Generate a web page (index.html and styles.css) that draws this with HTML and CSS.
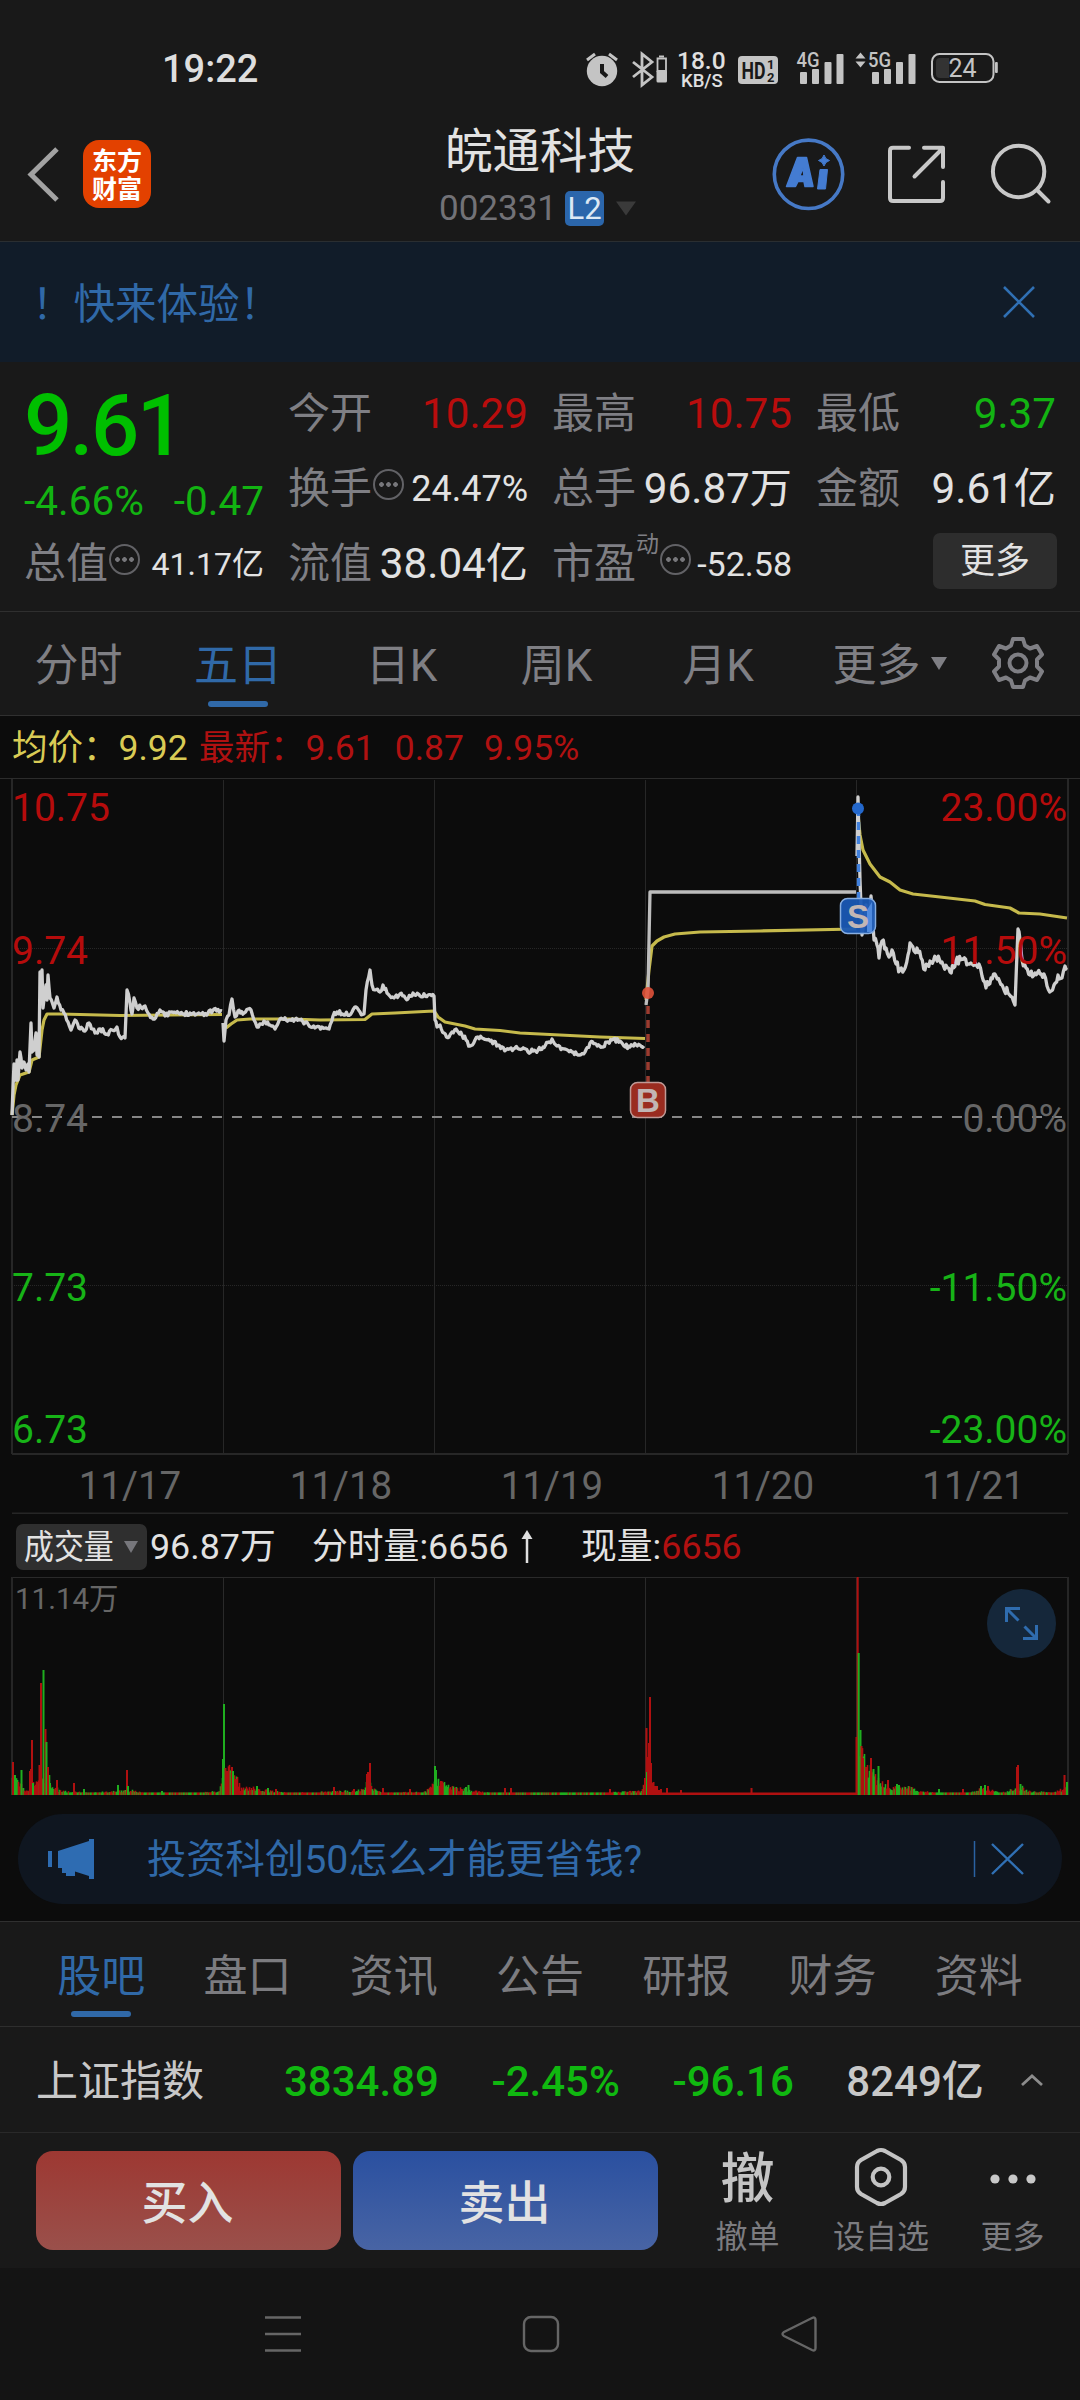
FILE: index.html
```html
<!DOCTYPE html>
<html lang="zh-CN">
<head>
<meta charset="utf-8">
<title>皖通科技 002331</title>
<link rel="stylesheet" href="styles.css">
</head>
<body>
<div class="screen">
  <div class="status">
    <span class="clock">19:22</span>
    <svg class="status-icons" width="424" height="44" viewBox="580 46 424 44">
      <g fill="#c4c4c4">
        <circle cx="602" cy="71" r="15.2"/>
        <path d="M587 60l8-6M609 54l8 6" stroke="#c4c4c4" stroke-width="3"/>
        <path d="M602 64v8l5 4.500" fill="none" stroke="#191919" stroke-width="4"/>
        <path d="M633 62l19 15-10 8V54l10 8-19 15" fill="none" stroke="#c4c4c4" stroke-width="2.800"/>
        <path d="M657.500 58.500h8.500V71h-8.500z" fill="none" stroke="#c4c4c4" stroke-width="1.800"/>
        <rect x="656.500" y="70" width="10.500" height="12.500" rx="1.500"/><rect x="659" y="55.500" width="5" height="2"/>
        <text x="677" y="69" class="s-speed">18.0</text>
        <text x="681" y="87" class="s-unit">KB/S</text>
        <rect x="738" y="56" width="40" height="28" rx="4"/>
        <text x="741.500" y="79" class="s-hd" textLength="24" lengthAdjust="spacingAndGlyphs">HD</text>
        <text x="767" y="69" class="s-num">1</text><text x="767" y="82" class="s-num">2</text>
        <text x="796.500" y="67" class="s-net" textLength="23" lengthAdjust="spacingAndGlyphs">4G</text>
        <rect x="800" y="72" width="7" height="12" rx="1"/><rect x="812" y="69" width="7" height="15" rx="1"/><rect x="824.500" y="62" width="7" height="22" rx="1"/><rect x="836.500" y="54" width="7" height="30" rx="1"/>
        <path d="M855.500 58.500l5-6 5 6zM855.500 61.500l5 6 5-6z"/>
        <text x="868" y="67" class="s-net" textLength="23" lengthAdjust="spacingAndGlyphs">5G</text>
        <rect x="872" y="72" width="7" height="12" rx="1"/><rect x="884" y="69" width="7" height="15" rx="1"/><rect x="896" y="62" width="7" height="22" rx="1"/><rect x="908.500" y="54" width="7" height="30" rx="1"/>
        <rect x="932" y="54" width="61.500" height="28" rx="7.500" fill="none" stroke="#c4c4c4" stroke-width="2"/>
        <path d="M940 58h9v20h-9a4 4 0 0 1-4-4V62a4 4 0 0 1 4-4z" fill="#333"/>
        <rect x="995" y="62" width="2.800" height="11" rx="1"/>
        <text x="948.500" y="77" class="s-bat">24</text>
      </g>
    </svg>
  </div>

  <header class="header">
    <div class="head-left">
      <svg width="34" height="56" viewBox="0 0 34 56"><path d="M31 3L5 28.500 31 54" fill="none" stroke="#a2a2a2" stroke-width="5"/></svg>
      <div class="logo">东方<br>财富</div>
    </div>
    <div class="head-mid">
      <div class="title">皖通科技</div>
      <div class="code"><span>002331</span><b>L2</b><svg width="22" height="15" viewBox="0 0 22 15"><path d="M1 .5h20L11 14.500z" fill="#3a3a3a"/></svg></div>
    </div>
    <svg class="head-tools" width="284" height="76" viewBox="770 136 284 76">
      <circle cx="808.500" cy="174.300" r="34.200" fill="none" stroke="#4679c6" stroke-width="3.600"/>
      <path d="M797.500 157.500h9l6.500 29h-8l-1-5h-6l-2.500 5h-9zM803 168l-3.200 8h4.200z" fill="#447cd2" fill-rule="evenodd" stroke="#447cd2" stroke-width="1.500" stroke-linejoin="round"/>
      <path d="M820 169.500h7.500l-2 19.500h-8zM824 155q1.200 4.500 5.500 5.500-4.300 1.200-5.500 5.500-1.200-4.300-5.500-5.500 4.300-1 5.500-5.500z" fill="#447cd2" stroke="#447cd2" stroke-width="1" stroke-linejoin="round"/>
      <g fill="none" stroke="#c8c8c8" stroke-width="4" stroke-linecap="round" stroke-linejoin="round">
        <path d="M909 147.800h-16q-3 0-3 3V198q0 3 3 3h47q3 0 3-3v-16M924 147.800h19V167M942 149l-27.500 27.500"/>
        <circle cx="1018.600" cy="171.500" r="25.700"/><path d="M1037.500 190.500l11 11"/>
      </g>
    </svg>
  </header>

  <div class="banner"><span>！快来体验！</span>
    <svg width="32" height="32" viewBox="0 0 32 32"><path d="M1 1l30 30M31 1L1 31" stroke="#3070b4" stroke-width="2.600"/></svg>
  </div>

  <section class="quote">
    <div class="col">
      <div class="price">9.61</div>
      <div class="change"><span>-4.66%</span><span>-0.47</span></div>
      <div class="cell"><span class="lb">总值<i class="dots"></i></span><span class="v v32">41.17亿</span></div>
    </div>
    <div class="col">
      <div class="cell"><span class="lb">今开</span><span class="v up">10.29</span></div>
      <div class="cell"><span class="lb">换手<i class="dots"></i></span><span class="v v36">24.47%</span></div>
      <div class="cell"><span class="lb">流值</span><span class="v">38.04亿</span></div>
    </div>
    <div class="col">
      <div class="cell"><span class="lb">最高</span><span class="v up">10.75</span></div>
      <div class="cell"><span class="lb">总手</span><span class="v">96.87万</span></div>
      <div class="cell"><span class="lb">市盈<em>动</em><i class="dots"></i></span><span class="v v34">-52.58</span></div>
    </div>
    <div class="col">
      <div class="cell"><span class="lb">最低</span><span class="v down">9.37</span></div>
      <div class="cell"><span class="lb">金额</span><span class="v">9.61亿</span></div>
      <div class="cell end"><span class="more">更多</span></div>
    </div>
  </section>

  <nav class="periods">
    <span>分时</span><span class="on">五日</span><span>日K</span><span>周K</span><span>月K</span>
    <span class="pm">更多<svg width="16" height="13" viewBox="0 0 16 13"><path d="M0 0h16L8 13z" fill="#7f7f84"/></svg></span>
    <svg class="gear" width="54" height="54" viewBox="-27 -27 54 54" fill="none" stroke="#7f7f84" stroke-width="4" stroke-linejoin="round"><path d="M-5-24H5L7-17.500 12-14.500 19-17 24-8.500 19-3.500V3.500L24 8.500 19 17 12 14.500 7 17.500 5 24H-5L-7 17.500-12 14.500-19 17-24 8.500-19 3.500V-3.500L-24-8.500-19-17-12-14.500-7-17.500Z"/><circle r="8.500"/></svg>
  </nav>

  <div class="legend"><span class="avg">均价：9.92</span><span class="last">最新：9.61</span><span class="last">0.87</span><span class="last">9.95%</span></div>

  <svg class="chart" id="price" width="1080" height="736" viewBox="0 778 1080 736">
    <g stroke="#272727" fill="none">
      <path d="M0 778.500H1080" stroke="#2c2c2c"/>
      <path d="M12 779V1454M1068 779V1454M12 1454H1068" stroke-width="2"/>
      <path d="M223.500 780V1453M434.500 780V1453M645.500 780V1453M856.500 780V1453"/>
      <path d="M12 948.500H1068M12 1285.500H1068" stroke-dasharray="1 1"/>
    </g>
    <path d="M12 1117H1064" stroke="#868686" stroke-width="2" stroke-dasharray="10 10"/>
    <g id="lines" fill="none" stroke-linejoin="round"></g>
    <g class="axis">
      <text x="12" y="821" class="r">10.75</text><text x="12" y="964" class="r">9.74</text><text x="12" y="1132">8.74</text><text x="12" y="1301" class="g">7.73</text><text x="12" y="1443" class="g">6.73</text>
      <g text-anchor="end"><text x="1067" y="821" class="r">23.00%</text><text x="1067" y="964" class="r">11.50%</text><text x="1067" y="1132">0.00%</text><text x="1067" y="1301" class="g">-11.50%</text><text x="1067" y="1443" class="g">-23.00%</text></g>
    </g>
    <g class="dates" text-anchor="middle"><text x="130" y="1499">11/17</text><text x="341" y="1499">11/18</text><text x="552" y="1499">11/19</text><text x="763" y="1499">11/20</text><text x="973.500" y="1499">11/21</text></g>
    <path d="M648 1006V1082" stroke="#9c3c30" stroke-width="3.500" stroke-dasharray="8 6"/>
    <circle cx="648" cy="993" r="6" fill="#e0523a" fill-opacity=".9"/>
    <rect x="630.500" y="1082.500" width="35" height="35" rx="7" fill="#9a2c20" stroke="#c09a96" stroke-width="1.500"/>
    <text x="648" y="1112" text-anchor="middle" class="mark">B</text>
    <path d="M858.500 808V898" stroke="#4080dc" stroke-width="3.500" stroke-dasharray="8 6"/>
    <circle cx="858" cy="808.500" r="6" fill="#2468cc"/>
    <rect x="840.500" y="898.500" width="35" height="35" rx="7" fill="#1a58b4" fill-opacity=".95" stroke="#88aee0" stroke-width="1.500"/>
    <path d="M867 932V910l5-8v30z" fill="#4f8ade"/>
    <text x="858" y="928" text-anchor="middle" class="mark">S</text>
    <path d="M12 1513.500H1068" stroke="#262626" stroke-width="2"/>
  </svg>

  <div class="vol-head">
    <span class="pick"><span>成交量</span><svg width="14" height="12" viewBox="0 0 14 12"><path d="M0 0h14L7 12z" fill="#77777c"/></svg></span>
    <span class="total">96.87万</span>
    <span class="minute">分时量:6656</span>
    <svg class="arrow" width="12" height="34" viewBox="0 0 12 34"><path d="M6 5V33" stroke="#e0e0e0" stroke-width="2.500"/><path d="M6 0l5.500 9H.5z" fill="#e0e0e0"/></svg>
    <span class="now">现量:<b>6656</b></span>
  </div>

  <svg class="chart" width="1080" height="225" viewBox="0 1577 1080 225">
    <path d="M12 1577.500H1068M223.500 1577V1795M434.500 1577V1795M645.500 1577V1795M856.500 1577V1795" stroke="#2a2a2a"/>
    <path d="M12 1577V1795M1068 1577V1795" stroke="#262626" stroke-width="2"/>
    <text x="15" y="1609" class="vmax">11.14万</text>
    <g id="volume"></g>
    <circle cx="1021.500" cy="1623.500" r="34.500" fill="#15273a"/>
    <path d="M1018.500 1620.500l-11-11M1020 1608.500h-13.500v13.500M1024.500 1626.500l11.500 11.500M1023 1638.500h13.500v-13.500" fill="none" stroke="#2f6cae" stroke-width="3"/>
  </svg>

  <div class="promo">
    <svg width="46" height="40" viewBox="0 0 46 40"><path d="M10 12L41 2V0h5v40h-5v-3L27 32.500V37H18V34H14V29H10zM0 12h4v16H0z" fill="#2e6cb2"/></svg>
    <span>投资科创50怎么才能更省钱?</span>
    <svg class="close" width="52" height="38" viewBox="0 0 52 38"><path d="M1.500 1V37" stroke="#2a62a2" stroke-width="1.500"/><path d="M19 4l31 30M50 4L19 34" stroke="#3070b4" stroke-width="2.400"/></svg>
  </div>

  <nav class="tabs"><span class="on">股吧</span><span>盘口</span><span>资讯</span><span>公告</span><span>研报</span><span>财务</span><span>资料</span></nav>

  <div class="index">
    <span class="name">上证指数</span><b>3834.89</b><b>-2.45%</b><b>-96.16</b><b class="amt">8249亿</b>
    <svg width="24" height="14" viewBox="0 0 24 14"><path d="M2 12L12 3l10 9" fill="none" stroke="#8c8c8c" stroke-width="2.800"/></svg>
  </div>

  <div class="actions">
    <div class="btn buy">买入</div><div class="btn sell">卖出</div>
    <div class="act a1"><strong>撤</strong><span>撤单</span></div>
    <div class="act a2"><svg width="60" height="62" viewBox="-30 -30 60 62" fill="none" stroke="#c4c4c4" stroke-width="4.200"><path d="M-4-26Q0-28 4-26L20-17Q24-14.500 24-10V10Q24 14.500 20 17L4 26Q0 28-4 26L-20 17Q-24 14.500-24 10V-10Q-24-14.500-20-17Z"/><circle r="8.300"/></svg><span>设自选</span></div>
    <div class="act a3"><svg width="60" height="62" viewBox="-30 -32 60 62" fill="#c8c8c8"><circle cx="-18" r="4.600"/><circle r="4.600"/><circle cx="18" r="4.600"/></svg><span>更多</span></div>
  </div>

  <div class="sysnav">
    <svg width="36" height="38" viewBox="0 0 36 38"><path d="M0 2.500h36M0 19h36M0 35.500h36" stroke="#666" stroke-width="2.500"/></svg>
    <svg width="38" height="38" viewBox="0 0 38 38"><rect x="2" y="2" width="34" height="34" rx="7" fill="none" stroke="#666" stroke-width="2.400"/></svg>
    <svg width="38" height="38" viewBox="0 0 38 38"><path d="M32 3q3.500-1.500 3.500 2V33q0 3.500-3.500 2L4 21q-3-2 0-4z" fill="none" stroke="#666" stroke-width="2.400"/></svg>
  </div>
</div>
<script src="chart.js"></script>
</body>
</html>
```
FILE: styles.css
```css
* { box-sizing: border-box; }
body { margin: 0; background: #191919; font-family: Roboto, "Noto Sans CJK SC", sans-serif; }
svg { display: block; flex: none; }
b, i, em { font-weight: inherit; font-style: normal; }
.screen { width: 1080px; height: 2400px; overflow: hidden; color: #e2e2e2; background: #191919; display: flex; flex-direction: column; }
.screen > * { flex: none; }

.status { height: 112px; padding: 46px 76px 22px 162px; display: flex; justify-content: space-between; }
.clock { font-size: 38px; line-height: 46px; font-weight: 500; color: #dedede; }
.s-speed { font-size: 24.500px; font-weight: 500; fill: #e0e0e0; }
.s-unit { font-size: 18.500px; font-weight: 500; fill: #e0e0e0; }
.s-hd { font-size: 24px; font-weight: 700; fill: #191919; }
.s-num { font-size: 13px; font-weight: 700; fill: #191919; }
.s-net { font-size: 21px; font-weight: 500; }
.s-bat { font-size: 25px; }

.header { height: 130px; padding: 0 26px 0 26px; display: grid; grid-template-columns: 350px 1fr 284px; border-bottom: 1px solid #2a2e31; }
.head-left { display: flex; align-items: flex-start; gap: 23px; padding-top: 28px; }
.head-left svg { margin-top: 6px; }
.logo { width: 68px; height: 68px; border-radius: 16px; background: #e34100; color: #fff; font: 700 25px/28px "Noto Sans CJK SC", sans-serif; text-align: center; padding-top: 5px; }
.head-mid { padding: 10px 0 0 63px; }
.title { font-size: 47.500px; line-height: 60px; padding-left: 6px; white-space: nowrap; }
.code { display: flex; align-items: center; height: 38px; margin-top: 7px; font-size: 35px; color: #727277; }
.code b { width: 39px; height: 35px; margin: 0 11px 0 8px; border-radius: 5px; background: #2b66ab; color: #dce8f4; font-size: 31px; line-height: 36px; text-align: center; }
.head-tools { margin-top: 24px; }

.banner { height: 120px; padding: 0 45px 0 32px; display: flex; align-items: center; justify-content: space-between; background: #111c29; color: #3069a8; font-size: 41.500px; }
.banner span { margin-top: -3px; }

.quote { height: 250px; padding: 14px 26px 0 24px; display: grid; grid-template-columns: repeat(4, 240px); column-gap: 24px; border-bottom: 1px solid #2f2f2f; }
.price { height: 100px; line-height: 101px; font-size: 85px; font-weight: 500; color: #00bf00; letter-spacing: -2.500px; }
.change { height: 50px; line-height: 51px; font-size: 40.500px; color: #12b312; display: flex; justify-content: space-between; }
.cell { height: 75px; line-height: 76px; display: flex; justify-content: space-between; white-space: nowrap; }
.lb { display: flex; align-items: center; font-size: 42px; color: #7f7f84; }
.lb em { font-size: 23px; line-height: 24px; margin-bottom: 38px; }
.dots { width: 31px; height: 31px; margin: -8px 0 0 1px; border: 2px solid #626266; border-radius: 50%; background: radial-gradient(circle, #77777b 2px, transparent 2.600px) center / 7px 7px repeat-x; background-clip: content-box; padding: 0 3px; }
.v { font-size: 42.200px; }
.v36 { font-size: 36px; } .v34 { font-size: 34px; } .v32 { font-size: 32px; }
.up { color: #b90d0d; } .down { color: #12b312; }
.end { justify-content: flex-end; align-items: center; }
.more { width: 124px; height: 56px; margin-right: -1px; margin-top: -5px; border-radius: 7px; background: #2d2d2d; font-size: 35px; line-height: 57px; text-align: center; }

.periods { height: 104px; display: grid; grid-template-columns: 157px 162px 165px 145px 178px 165px 85px; line-height: 109px; font-size: 44px; text-align: center; color: #7f7f84; border-bottom: 1px solid #303030; }
.on { color: #3069a8; position: relative; }
.on::after { content: ""; position: absolute; left: calc(50% - 30px); bottom: 9px; width: 60px; height: 6px; border-radius: 3px; background: #3069a8; }
.periods .on::after { bottom: 14px; }
.pm { display: flex; justify-content: center; gap: 10px; align-items: center; height: 109px; }
.pm svg { margin-top: -7px; }
.gear { margin: 24px 0 0 19px; }

.legend { height: 62px; padding-left: 12px; background: #0c0c0c; font-size: 35.500px; line-height: 65px; display: flex; white-space: nowrap; }
.avg { color: #d9cb55; width: 187px; } .last { color: #b01111; margin-right: 20px; }
.chart { background: #0c0c0c; }
.axis { font-size: 39px; fill: #666; }
.axis .r { fill: #b60c0c; } .axis .g { fill: #17b317; }
.dates { font-size: 38.500px; fill: #666; }
.mark { font: 700 33px "Liberation Sans", sans-serif; fill: #c2b6b4; }
.vmax { font-size: 29.500px; fill: #666; }

.vol-head { height: 63px; padding: 3px 0 0 16px; background: #0c0c0c; display: flex; align-items: center; font-size: 35.800px; line-height: 61px; white-space: nowrap; }
.pick { width: 131px; height: 46px; border-radius: 7px; background: #2f2f2f; display: flex; align-items: center; padding-left: 8px; }
.pick span { font-size: 34px; width: 100px; transform: scaleX(.88); transform-origin: left; }
.total { margin-left: 3px; width: 162px; }
.minute { width: 209px; } .arrow { margin-right: 48px; }
.now b { color: #b01111; }

.promo { height: 119px; padding: 12px 18px 17px; background: #0c0c0c; display: flex; position: relative; align-items: center; z-index: 0; color: #3069a8; font-size: 39.300px; }
.promo::before { content: ""; position: absolute; inset: 12px 18px 17px; border-radius: 45px; background: #0f1620; z-index: -1; }
.promo span { margin-top: -7px; }
.promo svg:first-child { margin: 0 53px 0 30px; }
.promo .close { margin-left: auto; margin-right: 37px; }

.tabs { height: 106px; padding: 0 28px; display: flex; line-height: 110px; font-size: 44px; text-align: center; color: #7c7c80; border-top: 1px solid #303030; border-bottom: 1px solid #2e2e2e; }
.tabs span { flex: 1; }

.index { height: 106px; padding: 4px 36px 0; display: flex; align-items: center; font-size: 42px; line-height: 100px; border-bottom: 1px solid #292929; white-space: nowrap; }
.index .name { width: 248px; color: #c8c8c8; }
.index b { font-weight: 500; color: #10b810; margin-right: 52.500px; }
.index .amt { color: #c8c8c8; margin-right: 0; }
.index svg { margin: -4px 0 0 auto; }

.actions { height: 135px; padding: 18px 0 0 36px; display: flex; }
.btn { flex: none; width: 305px; height: 99px; margin-right: 12px; border-radius: 17px; font-size: 46px; font-weight: 500; line-height: 104px; text-align: center; padding-right: 2px; }
.buy { background: linear-gradient(#9d3832, #9a504b); }
.sell { background: linear-gradient(#2a50a0, #4864a4); }
.act { flex: none; display: flex; flex-direction: column; align-items: center; font-size: 32px; line-height: 56px; color: #7c7c80; margin-top: -4px; }
.act strong { height: 62px; line-height: 66px; font-size: 54px; font-weight: 500; color: #c4c4c4; }
.a1 { width: 155px; } .a2 { width: 112px; } .a3 { width: 151px; }

.sysnav { flex: 1; background: #141414; padding: 47px 262px 0 265px; display: flex; justify-content: space-between; align-items: flex-start; }
```
FILE: chart.js
```js
const NS = 'http://www.w3.org/2000/svg';
let seed = 11;
const rnd = () => (seed = (seed * 16807) % 2147483647) / 2147483647;

// Price path of each trading day: x,y pairs
const price = [
  '12,1115 14,1064 16,1080 17,1060 18,1080 20,1052 22,1068 24,1062 26,1070 28,1064 29,1072 31,1023 32,1052 34,1050 36,1033 37,1055 38,1048 39,1057 40,972 41,1000 42,970 43,1008 46,985 47,1000 48,975 50,998 54,1008 57,997 61,1010 64,1013 68,1022 71,1030 75,1020 80,1029 85,1031 89,1023 95,1033 100,1029 107,1034 112,1030 117,1027 120,1037 125,1038 127,990 130,1003 132,1014 134,998 137,1008 145,1006 148,1013 153,1019 160,1010 165,1016 172,1012 180,1014 190,1013 200,1014 208,1013 214,1009 222,1011',
  '223,1023 224,1041 226,1020 229,1015 232,999 235,1017 238,1011 244,1013 251,1010 254,1020 257,1027 264,1021 270,1025 275,1029 280,1019 290,1020 300,1020 308,1024 315,1028 322,1027 329,1029 333,1016 337,1012 345,1015 352,1012 356,1007 360,1012 364,1014 366,990 370,970 372,985 375,990 380,992 383,985 387,993 394,998 400,994 408,999 413,993 420,996 428,995 434,996 435,1020 437,1027 440,1025 444,1033 449,1037 452,1032 456,1029 462,1035 466,1040 470,1046 475,1040 482,1038 490,1041 498,1045 506,1050 515,1048 522,1049 528,1052 538,1050 543,1047 549,1042 552,1039 557,1046 565,1049 572,1052 578,1055 585,1052 590,1043 596,1044 602,1047 608,1042 612,1040 620,1041 624,1046 630,1047 636,1045 644,1046',
  '646,1005 648,990 650,892 856,892',
  '857,856 858,797 860,880 862,935 866,905 869,930 871,896 873,925 874,940 877,945 879,958 882,941 886,948 889,957 892,950 896,964 900,970 904,970 908,955 910,943 914,951 917,948 921,958 925,970 930,961 936,958 942,962 950,972 956,961 962,959 968,964 975,963 979,964 982,976 986,988 991,978 996,976 1002,985 1008,993 1015,1005 1018,929 1020,940 1022,960 1026,968 1030,975 1035,973 1040,974 1044,974 1047,986 1051,991 1054,985 1058,975 1062,978 1065,966 1067,970'
];
const average = [
  '12,1115 14,1095 16,1085 20,1075 29,1072 32,1060 39,1057 42,1030 44,1020 47,1014 60,1014 120,1015.5 222,1014.5',
  '226,1028 231,1024 237,1020 250,1019 290,1019 320,1020 365,1019.5 372,1014 395,1013 434,1011 438,1017 445,1022 465,1026 475,1029 500,1030.5 520,1033 560,1035 600,1037 645,1038.5',
  '646,1000 649,970 652,946 657,941 664,937 675,934 700,932 760,931 856,929',
  '858,815 860,835 863,850 870,864 880,877 890,882 900,890 913,894 940,897 975,901 985,904.5 1010,908 1019,913 1040,914 1067,918'
];
const lines = document.getElementById('lines');
function draw(points, color, width) {
  const el = document.createElementNS(NS, 'polyline');
  el.setAttribute('points', points);
  el.setAttribute('stroke', color);
  el.setAttribute('stroke-width', width);
  lines.appendChild(el);
}
// Minute ticks between the key points
function ticks(str, amp) {
  const p = str.split(' ').map(s => s.split(',').map(Number));
  const out = [p[0]];
  for (let i = 1; i < p.length; i++) {
    const [x0, y0] = p[i - 1], [x1, y1] = p[i];
    const n = Math.max(1, Math.round((x1 - x0) / 1.3));
    for (let k = 1; k <= n; k++) {
      const j = k < n ? (rnd() - 0.5) * amp : 0;
      out.push([(x0 + (x1 - x0) * k / n).toFixed(1), (y0 + (y1 - y0) * k / n + j).toFixed(1)]);
    }
  }
  return out.map(q => q.join(',')).join(' ');
}
average.forEach(a => draw(a, '#c6ba4c', 3.2));
price.forEach((p, i) => draw(i === 2 ? p : ticks(p, i === 3 ? 8 : 4.5), i === 2 ? '#bdbdbd' : '#cfcfcf', 3.3));

// Volume bars: x, height, colour
const R = '#b01010', G = '#1fae1f';
const vol = document.getElementById('volume');
function bar(x, h, c, w = 2) {
  const el = document.createElementNS(NS, 'rect');
  el.setAttribute('x', x - w / 2);
  el.setAttribute('y', 1795 - h);
  el.setAttribute('width', w);
  el.setAttribute('height', h);
  el.setAttribute('fill', c);
  vol.appendChild(el);
}
// Typical height around each x, linearly interpolated
const env = [[12, 14], [18, 14], [24, 5], [30, 5], [33, 12], [39, 12], [48, 22], [52, 8], [62, 4], [90, 2], [118, 4], [130, 5], [145, 2], [200, 2], [218, 4], [222, 14], [228, 26], [236, 18], [240, 7], [255, 7], [270, 4], [290, 2], [325, 3], [345, 4], [363, 5], [368, 20], [372, 8], [382, 2], [425, 3], [434, 14], [444, 12], [455, 7], [470, 5], [490, 2], [600, 2], [640, 4], [645, 12]];
const env5 = [[857, 60], [860, 48], [866, 28], [872, 22], [880, 12], [892, 8], [905, 8], [920, 4], [935, 2], [970, 2], [980, 6], [992, 5], [1000, 2], [1015, 6], [1022, 8], [1030, 3], [1055, 3], [1067, 8]];
function fill(list) {
  for (let i = 1; i < list.length; i++) {
    const [x0, h0] = list[i - 1], [x1, h1] = list[i];
    for (let x = x0; x < x1; x += 1) {
      const h = (h0 + (h1 - h0) * (x - x0) / (x1 - x0)) * (0.55 + rnd() * 0.7);
      bar(x + 0.5, Math.max(2.5, h), rnd() < 0.55 ? R : G, 1.6);
    }
  }
}
fill(env);
fill(env5);
bar(751, 2.5, R, 213);
[[13, 33, R], [15, 20, G], [16, 16, G], [21.5, 25, G], [30, 24, R], [31, 26, R], [32, 55, R], [33, 12, G], [37, 13, R], [39.5, 30, R], [41, 112, R], [43.5, 125, G], [45.5, 66, R], [46.5, 53, G], [48, 28, R], [50, 12, G], [57, 15, R], [74, 12, R], [84, 6, G], [118, 10, G], [127, 25, R], [128, 9, G],
 [162, 4, G], [223, 36, G], [224, 91, G], [225.5, 27, R], [227, 24, R], [232, 28, R], [233, 24, G], [236, 16, R], [257, 9, G], [268, 7, G], [276, 6, R], [334, 8, R], [354, 6, R], [367, 21, R], [368, 23, R], [370, 32, R], [383, 7, R],
 [410, 6, R], [435, 29, G], [436, 25, G], [441, 14, R], [455, 7, R], [466, 8, G], [468.5, 10, G], [505, 7, R], [511, 7, R], [610, 6, R],
 [645, 17, R], [646.5, 67, R], [647, 23, G], [648, 38, R], [649, 52, R], [650, 98, R], [651, 32, R], [652, 12, R], [653.5, 13, R], [655, 9, R], [657, 9, R], [659, 5, R], [661, 6, R], [667, 7, R], [681, 5, R], [751.5, 7, R],
 [856.5, 58, R], [857.7, 218, R], [858.7, 142, G], [860.5, 65, G], [861.5, 49, R], [863, 37, R], [866, 28, R], [871, 37, R], [873.5, 26, G], [878.5, 29, G], [888, 15, R], [897, 11, G], [899, 10, G], [939, 6, G], [963, 6, R], [981, 9, G], [985, 10, G], [988, 9, R], [1017, 28, R], [1018, 30, R], [1020.5, 11, G], [1064.5, 20, R], [1067, 13, G]
].forEach(b => bar(...b));
```
